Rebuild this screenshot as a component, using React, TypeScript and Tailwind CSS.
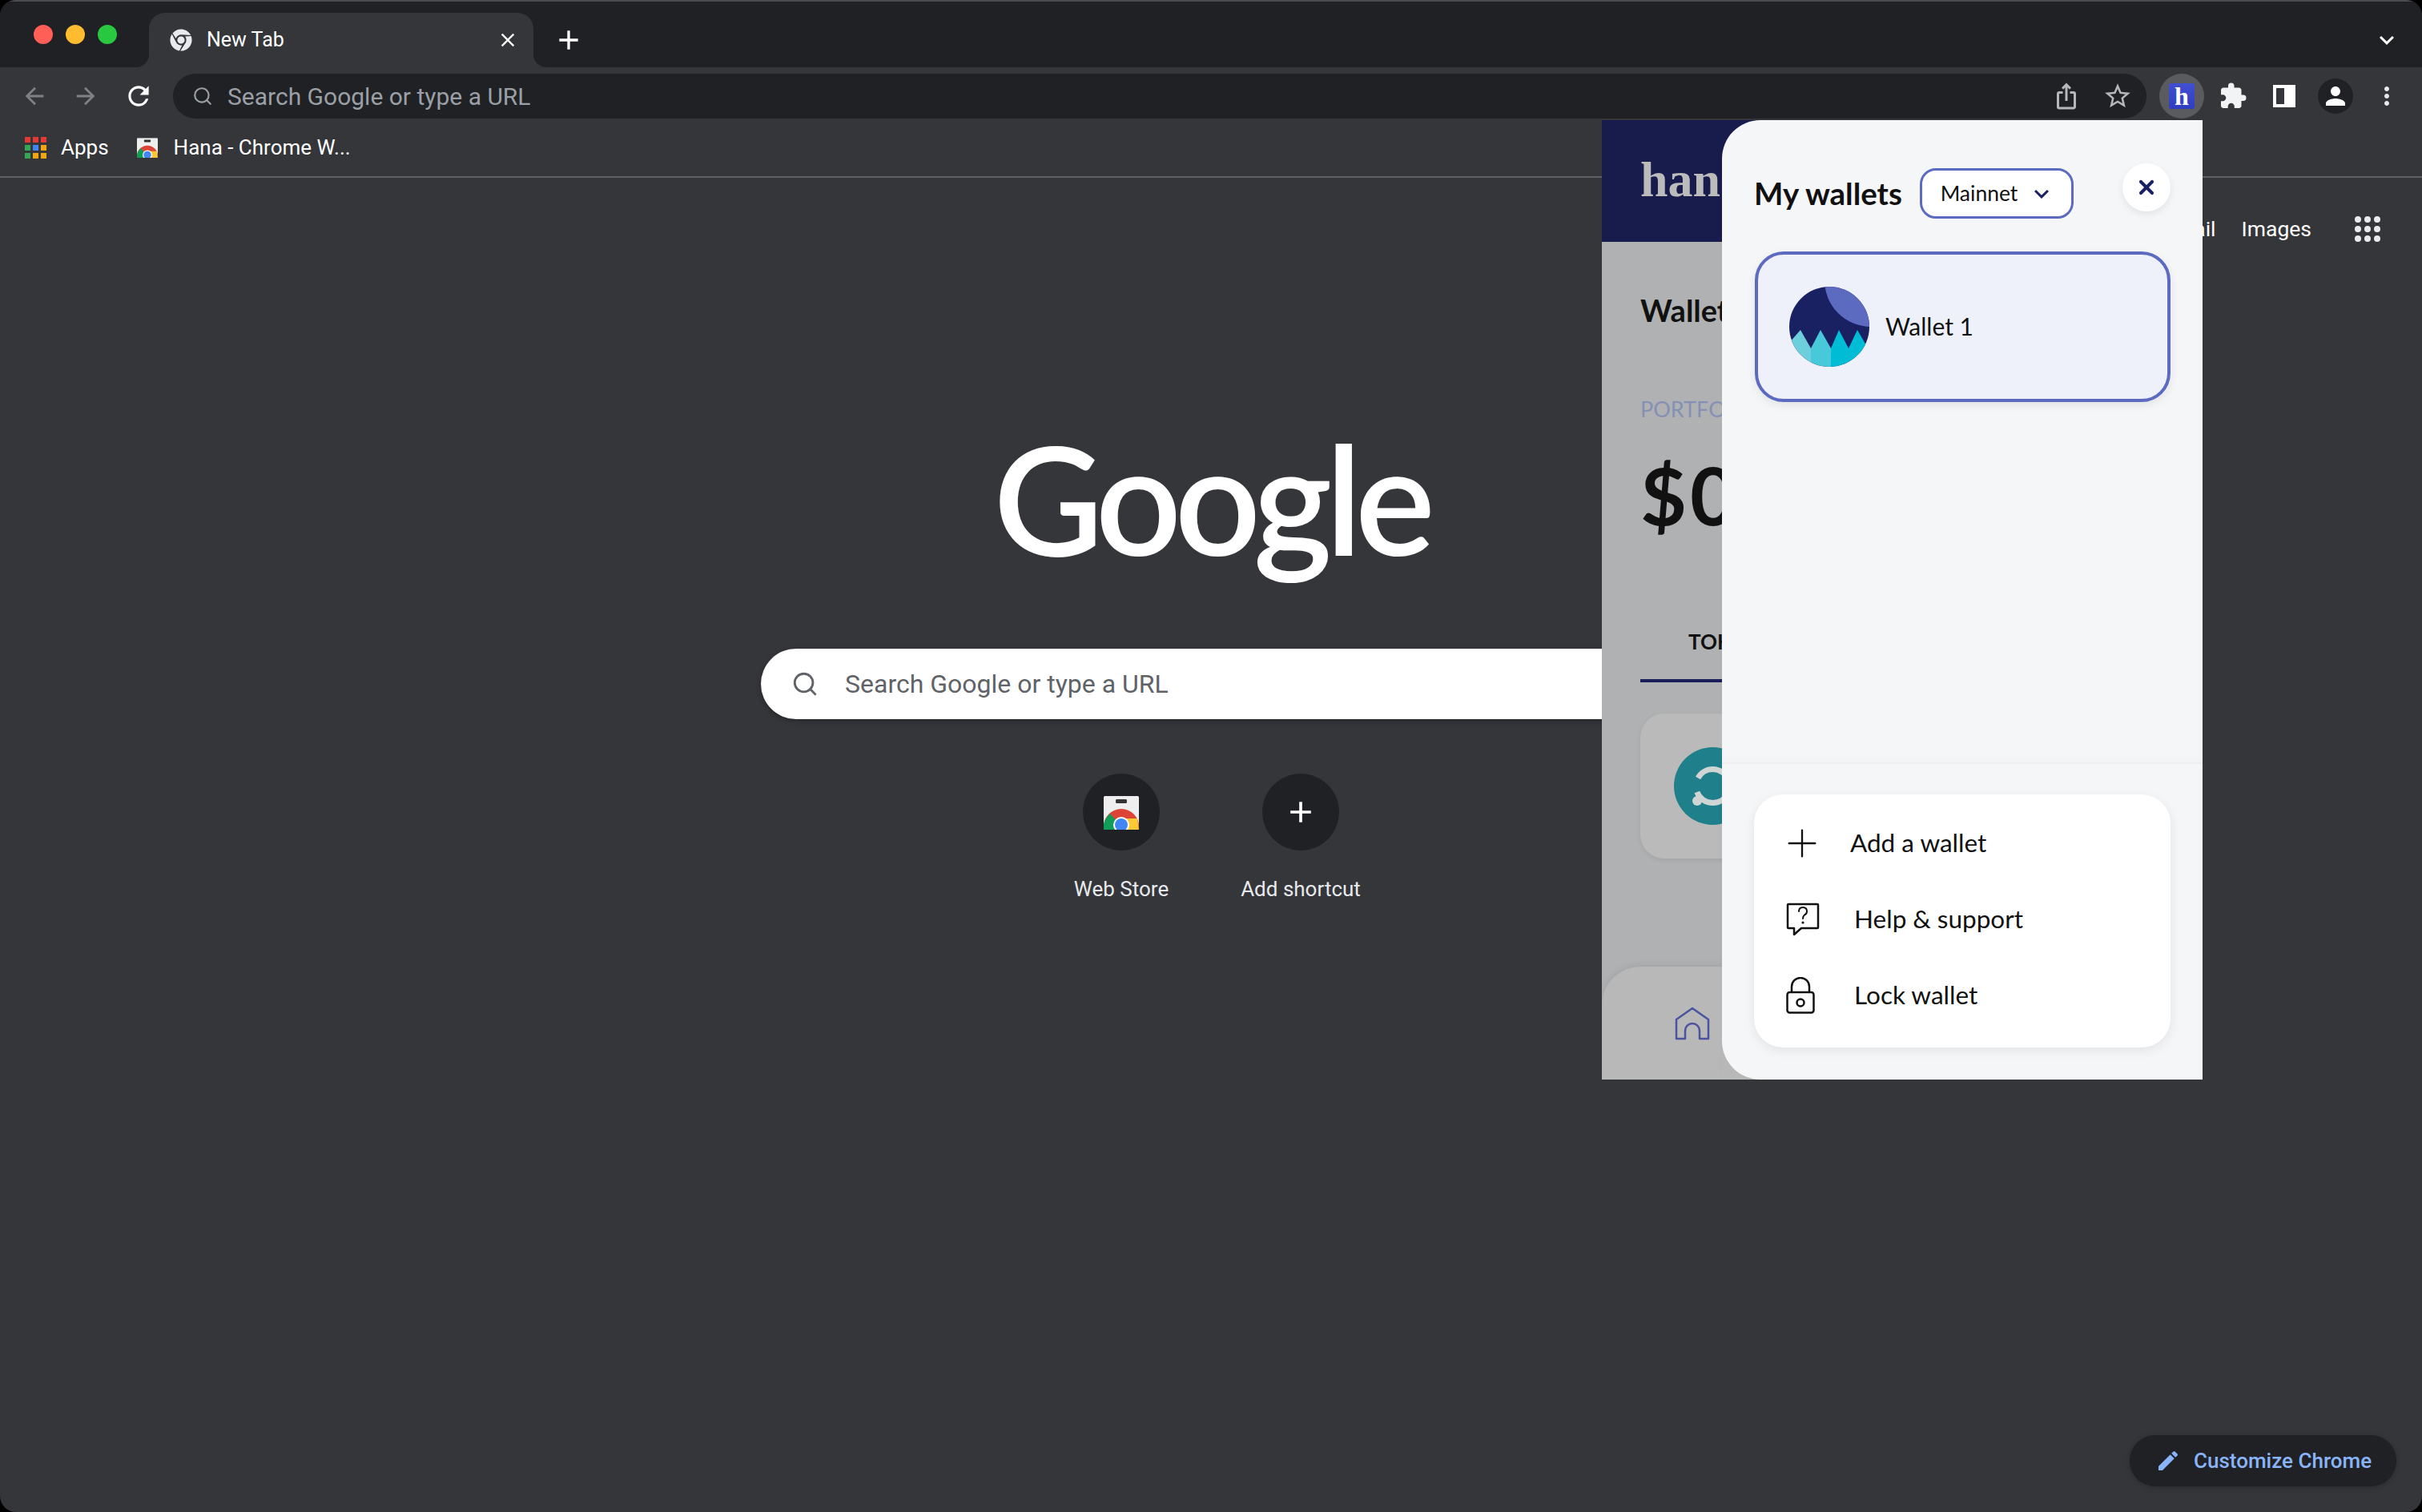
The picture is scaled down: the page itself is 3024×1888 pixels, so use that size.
import React from "react";
import { FaChrome } from "react-icons/fa";
import {
  MdArrowBack,
  MdArrowForward,
  MdRefresh,
  MdStarBorder,
  MdIosShare,
  MdExtension,
  MdPerson,
  MdMoreVert,
  MdAdd,
  MdClose,
  MdEdit,
  MdKeyboardArrowDown,
} from "react-icons/md";
import { Search, Plus, X } from "lucide-react";

const roboto = "font-['Roboto',sans-serif]";
const lato = "font-['Lato',sans-serif]";

function StoreIcon({ size }: { size: number }) {
  return (
    <svg width={size} height={size} viewBox="0 0 44 44" className="block">
      <defs>
        <clipPath id={`bag${size}`}>
          <rect x="0" y="2" width="44" height="42" rx="1.5" />
        </clipPath>
      </defs>
      <g clipPath={`url(#bag${size})`}>
        <rect x="0" y="2" width="44" height="42" fill="#eeeeee" />
        <rect x="15" y="6" width="14" height="5" rx="1.5" fill="#333" />
        <circle cx="22" cy="40" r="22" fill="#db4437" />
        <path d="M0 44 L0 38 A22 22 0 0 1 8 24 L22 40 L16 44 Z" fill="#0f9d58" />
        <path d="M22 30 H42 L44 44 H22 Z" fill="#fcc934" />
        <circle cx="22" cy="38" r="10" fill="#fff" />
        <circle cx="22" cy="38" r="8" fill="#4285f4" />
      </g>
    </svg>
  );
}

function AppsIcon() {
  const colors = ["#e53935", "#e53935", "#e53935", "#34a853", "#4285f4", "#f4a60d", "#34a853", "#f4a60d", "#f4a60d"];
  return (
    <div className="grid grid-cols-3 gap-[3px] w-[27px]">
      {colors.map((c, i) => (
        <div key={i} className="w-[7px] h-[7px]" style={{ backgroundColor: c }} />
      ))}
    </div>
  );
}

function WalletAvatar() {
  return (
    <svg width="100" height="100" viewBox="0 0 100 100" className="block shrink-0">
      <defs>
        <clipPath id="av">
          <circle cx="50" cy="50" r="50" />
        </clipPath>
      </defs>
      <g clipPath="url(#av)">
        <rect width="100" height="100" fill="#1a2163" />
        <circle cx="102" cy="-8" r="58" fill="#5c6bc0" />
        <polygon points="0,70 14,54 27,77 27,100 0,100" fill="#6dcfdc" />
        <polygon points="27,77 39,54 52,77 52,100 27,100" fill="#47c9d9" />
        <polygon points="52,77 62,54 74,77 85,54 100,80 100,100 52,100" fill="#00bcd4" />
      </g>
    </svg>
  );
}

function TokenLogo() {
  return (
    <svg width="97" height="97" viewBox="0 0 97 97" className="block shrink-0">
      <circle cx="48.5" cy="48.5" r="48.5" fill="#1f808b" />
      <circle cx="48.5" cy="48.5" r="21" fill="none" stroke="#cfd4d4" strokeWidth="7" strokeDasharray="48 18" strokeDashoffset="-10" />
      <circle cx="29" cy="67" r="6" fill="#cfd4d4" />
    </svg>
  );
}

function HelpIcon() {
  return (
    <svg width="42" height="44" viewBox="0 0 42 44" fill="none" stroke="#111" strokeWidth="2.5" className="block">
      <path d="M3 3 H39 Q40 3 40 4 V32 Q40 33 39 33 H19 L10 41 V33 H3 Q2 33 2 32 V4 Q2 3 3 3 Z" strokeLinejoin="round" />
      <path d="M16 12 Q16 7 21 7 Q26 7 26 12 Q26 15 23 16.5 Q21 18 21 21" strokeLinecap="round" strokeWidth="2" />
      <circle cx="21" cy="26" r="1.6" fill="#111" stroke="none" />
    </svg>
  );
}

function LockIcon() {
  return (
    <svg width="36" height="46" viewBox="0 0 36 46" fill="none" stroke="#111" strokeWidth="2.5" className="block">
      <rect x="1.5" y="19" width="33" height="25.5" rx="3" />
      <path d="M7 19 V12 A11 11 0 0 1 29 12 V19" />
      <circle cx="18" cy="32" r="4.5" />
    </svg>
  );
}

function HomeIcon() {
  return (
    <svg width="44" height="42" viewBox="0 0 44 42" fill="none" stroke="#4a549e" strokeWidth="2.5" strokeLinejoin="round" className="block">
      <path d="M2 16 L22 2 L42 16 V40 H31 V30 A9 9 0 0 0 13 30 V40 H2 Z" />
    </svg>
  );
}

function MenuRow({ icon, label, width }: { icon: React.ReactNode; label: string; width: string }) {
  return (
    <div className="flex items-center h-[95px]">
      <div className={`${width} shrink-0 pl-[40px]`}>{icon}</div>
      <span className="text-[31.5px] text-[#111]">{label}</span>
    </div>
  );
}

export default function App() {
  return (
    <div className="w-[3024px] h-[1888px] bg-black">
      <div className={`relative w-full h-full rounded-[20px] overflow-hidden bg-[#35363a] flex flex-col ${roboto}`}>
        {/* Tab strip */}
        <div className="h-[84px] shrink-0 bg-[#202124] border-t-2 border-[#4b4c4f] flex items-end">
          <div className="w-[186px] h-[82px] flex items-center gap-[16px] pl-[42px] shrink-0">
            <div className="w-[24px] h-[24px] rounded-full bg-[#ff5f57]" />
            <div className="w-[24px] h-[24px] rounded-full bg-[#febc2e]" />
            <div className="w-[24px] h-[24px] rounded-full bg-[#28c840]" />
          </div>
          <div className="relative w-[480px] h-[68px] bg-[#35363a] rounded-t-[20px] flex items-center pl-[26px] pr-[18px] text-white shrink-0">
            <div className="absolute left-[-16px] bottom-0 w-[16px] h-[16px] bg-[radial-gradient(circle_at_0_0,#202124_15.5px,#35363a_16.5px)]" />
            <div className="absolute right-[-16px] bottom-0 w-[16px] h-[16px] bg-[radial-gradient(circle_at_100%_0,#202124_15.5px,#35363a_16.5px)]" />
            <FaChrome size={28} className="text-[#e8eaed] shrink-0" />
            <span className="ml-[18px] text-[25px] flex-1">New Tab</span>
            <MdClose size={28} />
          </div>
          <div className="ml-[24px] h-[68px] flex items-center text-white">
            <MdAdd size={40} />
          </div>
          <div className="ml-auto mr-[26px] h-[68px] flex items-center text-white">
            <MdKeyboardArrowDown size={36} />
          </div>
        </div>

        {/* Toolbar */}
        <div className="h-[72px] shrink-0 flex items-center">
          <div className="w-[216px] shrink-0 flex items-center pl-[26px] gap-[30px]">
            <MdArrowBack size={34} className="text-[#7f8185]" />
            <MdArrowForward size={34} className="text-[#7f8185]" />
            <MdRefresh size={38} className="text-white" />
          </div>
          <div className="w-[2464px] h-[56px] rounded-full bg-[#202124] flex items-center pl-[24px] shrink-0">
            <Search size={26} strokeWidth={2} className="text-[#9aa0a6]" />
            <span className="ml-[18px] text-[30px] text-[#9aa0a6]">Search Google or type a URL</span>
            <div className="ml-auto flex items-center gap-[27px] pr-[17px]">
              <MdIosShare size={36} className="text-[#b5b7ba]" />
              <MdStarBorder size={38} className="text-[#b5b7ba]" />
            </div>
          </div>
          <div className="flex items-center ml-[16px]">
            <div className="w-[56px] h-[56px] rounded-full bg-[#5a5b5f] flex items-center justify-center">
              <div className="w-[32px] h-[32px] rounded-[3px] bg-[linear-gradient(#4150d0,#2f3ec0)] flex items-center justify-center text-white text-[32px] font-bold leading-none font-['Liberation_Serif',serif]">
                h
              </div>
            </div>
            <MdExtension size={36} className="ml-[18px] text-[#f1f3f4]" />
            <div className="ml-[32px] w-[28px] h-[28px] border-[4px] border-white border-l-[4px] border-r-[14px]" />
            <div className="ml-[28px] w-[44px] h-[44px] rounded-full bg-[#202124] flex items-center justify-center">
              <MdPerson size={36} className="text-white" />
            </div>
            <MdMoreVert size={36} className="ml-[24px] text-[#e8eaed]" />
          </div>
        </div>

        {/* Bookmarks */}
        <div className="h-[66px] shrink-0 border-b-2 border-[#5f6063] flex items-center pl-[31px] pb-[8px] text-[26px] text-white">
          <AppsIcon />
          <span className="ml-[18px]">Apps</span>
          <div className="ml-[35px]">
            <StoreIcon size={26} />
          </div>
          <span className="ml-[20px]">Hana - Chrome W...</span>
        </div>

        {/* New tab page */}
        <div className="relative flex-1 flex flex-col items-center">
          <div className="w-full h-[128px] flex items-center justify-end pr-[52px] text-[26.5px] text-white">
            <span>Gmail</span>
            <span className="ml-[32px]">Images</span>
            <div className="ml-[54px] grid grid-cols-3 gap-[4px]">
              {Array.from({ length: 9 }).map((_, i) => (
                <div key={i} className="w-[8px] h-[8px] rounded-full bg-[#e8eaed]" />
              ))}
            </div>
          </div>

          <div className={`mt-[158px] h-[226px] text-[188px] leading-[226px] font-semibold text-white tracking-[-8.5px] ${lato}`}>Google</div>

          <div className="mt-[76px] w-[1124px] h-[88px] rounded-full bg-white shadow-[0_2px_6px_rgba(0,0,0,0.3)] flex items-center pl-[38px]">
            <Search size={34} strokeWidth={2} className="text-[#5f6368]" />
            <span className="ml-[33px] text-[32px] text-[#5f6368]">Search Google or type a URL</span>
          </div>

          <div className="mt-[68px] flex">
            <div className="w-[224px] flex flex-col items-center">
              <div className="w-[96px] h-[96px] rounded-full bg-[#202124] flex items-center justify-center">
                <StoreIcon size={44} />
              </div>
              <span className="mt-[32px] text-[26px] leading-[32px] text-[#e8eaed]">Web Store</span>
            </div>
            <div className="w-[224px] flex flex-col items-center">
              <div className="w-[96px] h-[96px] rounded-full bg-[#202124] flex items-center justify-center text-white">
                <MdAdd size={44} />
              </div>
              <span className="mt-[32px] text-[26px] leading-[32px] text-[#e8eaed]">Add shortcut</span>
            </div>
          </div>

          <div className="absolute right-[32px] bottom-[32px] w-[333px] h-[64px] rounded-full bg-[#202124] shadow-[0_1px_6px_rgba(0,0,0,0.25)] flex items-center pl-[32px] text-[#8ab4f8]">
            <MdEdit size={32} />
            <span className="ml-[16px] text-[26px] font-medium">Customize Chrome</span>
          </div>
        </div>

        {/* Extension popup */}
        <div className={`absolute left-[2000px] top-[150px] w-[750px] h-[1198px] overflow-hidden bg-[#b0b1b3] flex flex-col ${lato}`}>
          <div className="h-[152px] shrink-0 bg-[#171c4c] pl-[48px] flex items-center">
            <span className="text-[62px] font-bold text-[#bbbbbb] font-['Liberation_Serif',serif] mb-[4px]">hana</span>
          </div>
          <div className="px-[48px] flex flex-col">
            <div className="mt-[61px] text-[38px] leading-[48px] font-bold text-[#111]">Wallet 1</div>
            <div className="mt-[84px] text-[27px] leading-[32px] text-[#8590b5]">PORTFOLIO</div>
            <div className="mt-[40px] text-[100px] leading-[100px] font-bold text-[#111] tracking-[4px]">$0</div>
            <div className="mt-[118px] w-[260px] border-b-4 border-[#1a1f5c] pb-[31px] pl-[60px] text-[26px] leading-[32px] font-bold text-[#111]">TOKENS</div>
            <div className="mt-[39px] h-[181px] rounded-[30px] bg-[#bababa] shadow-[0_2px_6px_rgba(0,0,0,0.08)] flex items-center pl-[42px]">
              <TokenLogo />
            </div>
          </div>
          <div className="mt-auto h-[141px] shrink-0 rounded-t-[48px] bg-[#b8b8b9] shadow-[0_-2px_8px_rgba(0,0,0,0.08)] flex items-center pl-[91px]">
            <HomeIcon />
          </div>

          {/* Drawer */}
          <div className="absolute left-[150px] right-0 top-0 bottom-0 bg-[#f5f6f8] rounded-l-[48px] flex flex-col">
            <div className="flex-1 pl-[40px] pr-[40px] pt-[54px]">
              <div className="flex items-start justify-between">
                <div className="flex items-center h-[63px] mt-[6px]">
                  <span className="text-[38.5px] font-bold text-[#111] w-[186px] whitespace-nowrap">My wallets</span>
                  <div className="ml-[21px] w-[192px] h-[63px] rounded-[20px] bg-white border-[3px] border-[#5c6bc0] flex items-center justify-center gap-[12px] pl-[4px]">
                    <span className="text-[26.5px] text-[#111]">Mainnet</span>
                    <MdKeyboardArrowDown size={36} className="text-[#1a2163]" />
                  </div>
                </div>
                <div className="w-[60px] h-[60px] rounded-full bg-white shadow-[0_4px_10px_rgba(0,0,0,0.08)] flex items-center justify-center">
                  <X size={28} strokeWidth={3.5} className="text-[#1a2163]" />
                </div>
              </div>
              <div className="mt-[41px] ml-[1px] w-[519px] h-[188px] rounded-[36px] bg-[#eef1fa] border-4 border-[#5c6bc0] shadow-[0_4px_12px_rgba(0,0,0,0.08)] flex items-center pl-[39px]">
                <WalletAvatar />
                <span className="ml-[20px] mb-[2px] text-[30px] text-[#111]">Wallet 1</span>
              </div>
            </div>
            <div className="h-[396px] shrink-0 border-t-2 border-[#eceef0] pt-[38px] pl-[40px] shadow-[0_-4px_8px_rgba(0,0,0,0.02)]">
              <div className="w-[520px] h-[316px] rounded-[36px] bg-white shadow-[0_4px_14px_rgba(0,0,0,0.08)] pt-[13px]">
                <MenuRow width="w-[120px]" label="Add a wallet" icon={<Plus size={56} strokeWidth={1} className="text-[#111] -ml-[8px]" />} />
                <MenuRow width="w-[125px]" label="Help & support" icon={<HelpIcon />} />
                <MenuRow width="w-[125px]" label="Lock wallet" icon={<LockIcon />} />
              </div>
            </div>
          </div>
        </div>
      </div>
    </div>
  );
}
